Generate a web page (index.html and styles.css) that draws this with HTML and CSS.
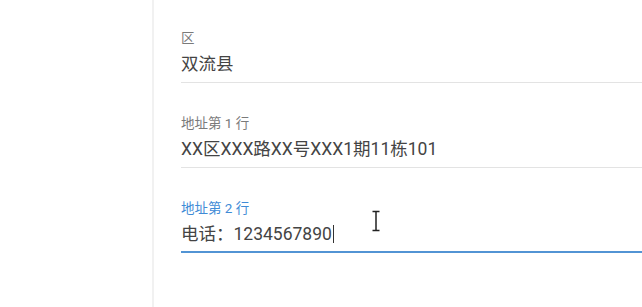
FILE: index.html
```html
<!DOCTYPE html>
<html lang="zh-CN">
<head>
  <meta charset="UTF-8">
  <title>地址</title>
  <link rel="stylesheet" href="styles.css">
</head>
<body>

<div class="page">
  <div class="side"></div>

  <!-- Address form -->
  <div class="panel">
    <div class="field">
      <div class="field-label">区</div>
      <div class="field-value">双流县</div>
    </div>
    <div class="field">
      <div class="field-label">地址第 1 行</div>
      <div class="field-value">XX区XXX路XX号XXX1期11栋101</div>
    </div>
    <div class="field focused">
      <div class="field-label">地址第 2 行</div>
      <div class="field-value">电话：1234567890<span class="caret"></span></div>
      <svg class="ibeam" width="10" height="22" viewBox="0 0 10 22">
        <path d="M1.5 1.5h7M5 1.5v19M1.5 20.5h7" stroke="#222" stroke-width="1.5" fill="none"/>
      </svg>
    </div>
  </div>
</div>

</body>
</html>
```

FILE: styles.css
```css
body {
  margin: 0;
  background: #fff;
  font-family: Roboto, "Noto Sans CJK SC", sans-serif;
}
.page {
  display: flex;
  height: 307px;
}
.side {
  width: 152px;
  flex-shrink: 0;
}
.panel {
  flex: 1;
  border-left: 2px solid #f1f1f1;
  padding-left: 27px;
}
.field {
  position: relative;
  padding: 32px 0 6px;
  border-bottom: 1px solid #e3e3e3;
}
.field:first-child {
  padding-top: 30px;
}
.field-label {
  font-size: 13.5px;
  line-height: 16px;
  color: #7a7a7a;
}
.field-value {
  margin-top: 6px;
  font-size: 17.5px;
  line-height: 24px;
  color: #444;
}
.focused {
  padding-bottom: 5px;
  border-bottom: 2px solid #5294d4;
}
.focused .field-label {
  color: #3f8bd6;
}
.caret {
  display: inline-block;
  width: 1px;
  height: 18px;
  margin-left: 1px;
  background: #333;
  vertical-align: -3px;
}
.ibeam {
  position: absolute;
  left: 190px;
  top: 42px;
}
```
